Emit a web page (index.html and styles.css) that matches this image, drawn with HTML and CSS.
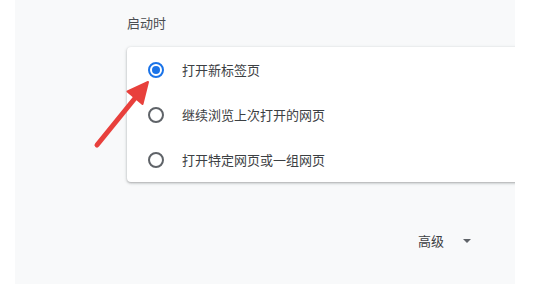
FILE: index.html
```html
<!DOCTYPE html>
<html lang="zh-CN">
<head>
<meta charset="utf-8">
<link rel="stylesheet" href="styles.css">
</head>
<body>
<div class="page">
  <div class="section-title">启动时</div>
  <div class="card">
    <div class="row">
      <span class="radio checked"></span>
      <span class="label">打开新标签页</span>
    </div>
    <div class="row">
      <span class="radio"></span>
      <span class="label">继续浏览上次打开的网页</span>
    </div>
    <div class="row">
      <span class="radio"></span>
      <span class="label">打开特定网页或一组网页</span>
    </div>
  </div>
  <div class="advanced">
    <span class="adv-label">高级</span>
    <span class="caret"></span>
  </div>
</div>
<svg class="arrow" width="535" height="285" viewBox="0 0 535 285">
  <line x1="97" y1="145" x2="136" y2="97" stroke="#e8403c" stroke-width="5" stroke-linecap="round"/>
  <polygon points="148,82 142.5,104 127.5,91.5" fill="#e8403c" stroke="#e8403c" stroke-width="2" stroke-linejoin="round"/>
</svg>
</body>
</html>
```

FILE: styles.css
```css
html, body {
  margin: 0;
  padding: 0;
  background: #ffffff;
}
body {
  position: relative;
  width: 535px;
  height: 285px;
  overflow: hidden;
  font-family: "Noto Sans CJK SC", "Noto Sans", sans-serif;
}
.page {
  margin-left: 15px;
  width: 500px;
  height: 284px;
  background: #f8f9fa;
  padding-left: 112px;
  padding-top: 13px;
  box-sizing: border-box;
  display: flex;
  flex-direction: column;
  overflow: hidden;
}
.section-title {
  font-size: 13px;
  line-height: 20px;
  color: #4a4d51;
}
.card {
  margin-top: 14px;
  margin-right: -20px;
  background: #ffffff;
  border-radius: 4px;
  box-shadow: 0 1px 2px rgba(60,64,67,0.3), 0 1px 3px 1px rgba(60,64,67,0.12);
  display: flex;
  flex-direction: column;
}
.row {
  height: 45px;
  display: flex;
  align-items: center;
  padding-left: 21px;
  gap: 18px;
}
.radio {
  width: 16px;
  height: 16px;
  box-sizing: border-box;
  border: 2px solid #5f6368;
  border-radius: 50%;
  display: flex;
  align-items: center;
  justify-content: center;
  flex: none;
}
.radio.checked {
  border-color: #1a73e8;
}
.radio.checked::after {
  content: "";
  width: 8px;
  height: 8px;
  border-radius: 50%;
  background: #1a73e8;
}
.label {
  font-size: 13px;
  line-height: 20px;
  color: #3c4043;
}
.advanced {
  margin-top: 49px;
  display: flex;
  align-items: center;
  justify-content: flex-end;
  padding-right: 44px;
  gap: 19px;
  height: 20px;
}
.adv-label {
  font-size: 13px;
  line-height: 20px;
  color: #3c4043;
}
.caret {
  width: 0;
  height: 0;
  border-left: 4px solid transparent;
  border-right: 4px solid transparent;
  border-top: 4px solid #5f6368;
}
.arrow {
  position: absolute;
  left: 0;
  top: 0;
}
```
